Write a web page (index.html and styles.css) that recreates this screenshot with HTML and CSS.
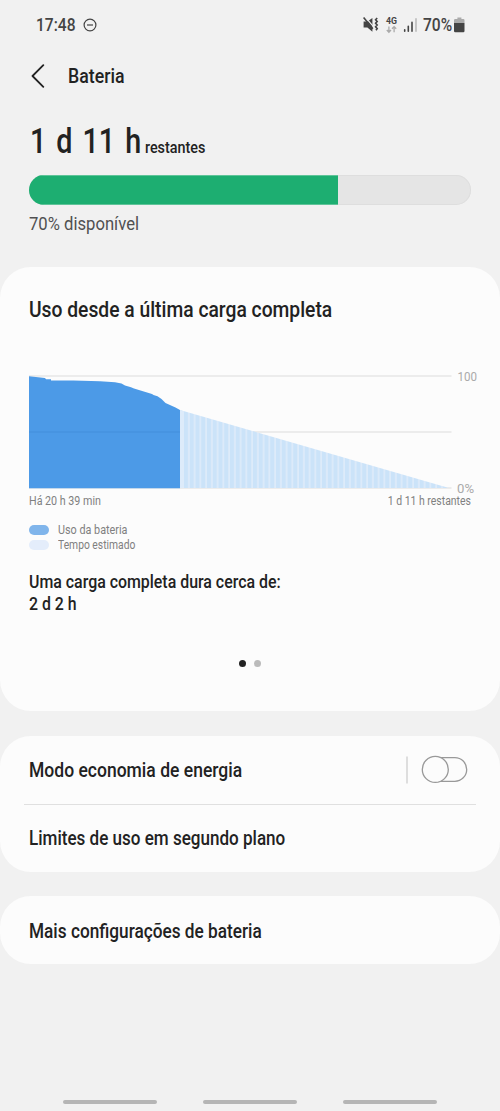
FILE: index.html
```html
<!DOCTYPE html>
<html lang="pt-BR">
<head>
<meta charset="utf-8">
<title>Bateria</title>
<link rel="stylesheet" href="styles.css">
</head>
<body>
<header class="status">
  <span class="clock"><span class="label clock-text">17:48</span></span>
  <svg class="dnd" width="14" height="14" viewBox="0 0 14 14"><circle cx="7" cy="7" r="5.9"/><path d="M4 7h6"/></svg>
  <svg class="signals" width="52" height="20" viewBox="0 0 52 20">
    <path class="solid" d="M0.6 6.5h3.8L9.4 3v13.8l-5-4.2H0.6z"/>
    <path class="gap" d="M2.2 1.8L11 12.4"/>
    <path class="ink" d="M0.6 2.4L9.8 13.8"/>
    <path class="ink" d="M14.2 3l-1.6 1.7 1.6 1.7-1.6 1.8 1.6 1.8-1.6 1.8 1.6 1.8-1.2 1.6"/>
    <text class="net" x="23" y="9.3" textLength="11" lengthAdjust="spacingAndGlyphs">4G</text>
    <path class="faint" d="M25.9 11.5v5.5M23.8 15l2.1 2.2L28 15M31.1 17.2v-5.5M29 13.8l2.1-2.2 2.1 2.2"/>
    <path class="bars" d="M41.7 16.2v-1.4M45.3 16.2v-5M49 16.2v-8.8"/>
  </svg>
  <svg class="bar-off" width="3" height="20" viewBox="0 0 3 20"><path d="M1 16.7v-13.5"/></svg>
  <span class="percent"><span class="label percent-text">70%</span></span>
  <svg class="cell" width="11" height="16" viewBox="0 0 11 16"><path class="cell-top" d="M3.4 0.5h4v1.5H9.3q1.2 0 1.2 1.2V6H0V3.2q0-1.2 1.2-1.2H3.4z"/><path class="cell-fill" d="M0 6h10.5v8q0 1.2-1.2 1.2H1.2Q0 15.2 0 14z"/></svg>
</header>
<div class="appbar">
  <svg class="back" width="14" height="24" viewBox="0 0 14 24"><path d="M12.3 1.2L1.5 12l10.8 10.8"/></svg>
  <h1 class="label">Bateria</h1>
</div>
<section class="summary">
  <div class="remaining"><span class="time"><span class="label time-text">1 d 11 h</span></span><span class="label unit">restantes</span></div>
  <div class="meter"><div class="meter-fill" style="width:70%"></div></div>
  <span class="label available">70% disponível</span>
</section>
<main>
  <section class="card usage">
    <h2 class="label">Uso desde a última carga completa</h2>
    <svg class="chart" width="451" height="130" viewBox="29 364 451 130">
      <defs>
        <pattern id="stripes" x="184" y="0" width="5.75" height="10" patternUnits="userSpaceOnUse"><rect class="stripe-a" width="6" height="10"/><rect class="stripe-b" x="4" width="1.75" height="10"/></pattern>
      </defs>
      <path class="grid" d="M29 376h422.5M29 432h422.5M29 488h422.5"/>
      <path fill="url(#stripes)" d="M180 410L449 488H180z"/>
      <path class="stripe-b" d="M180 410l4 1.2V488h-4z"/>
      <path class="used" d="M29 376.3L45 378l1 1.3h5v1.2l22 .1 27 .6 15 1 6.5 1.3 3.5 2 6 1.7 3 1.3L152 394l1.5 1 4 1.3 4 2.7 4 4 10 4.5 4.500 2.600v78.200H29z"/>
      <path class="used-line" d="M29 432h151"/>
      <text class="axis" x="457.5" y="380.5" textLength="19.5" lengthAdjust="spacingAndGlyphs">100</text>
      <text class="axis" x="457" y="492.5" textLength="17" lengthAdjust="spacingAndGlyphs">0%</text>
    </svg>
    <div class="range"><span class="label since">Há 20 h 39 min</span><span class="label until">1 d 11 h restantes</span></div>
    <ul class="legend">
      <li><i class="swatch"></i><span class="label used-key">Uso da bateria</span></li>
      <li><i class="swatch pale"></i><span class="label estimate-key">Tempo estimado</span></li>
    </ul>
    <p class="full"><span class="label full-title">Uma carga completa dura cerca de:</span><span class="label full-value">2 d 2 h</span></p>
    <div class="dots"><i class="dot on"></i><i class="dot"></i></div>
  </section>
  <section class="card">
    <div class="row"><span class="label saver">Modo economia de energia</span>
      <svg class="switch" width="66" height="32" viewBox="405 754 66 32"><path class="sep" d="M407 756.5v27"/><rect x="423" y="757.6" width="43.7" height="23.7" rx="11.85"/><circle cx="435.3" cy="769.4" r="13"/></svg>
    </div>
    <div class="row second"><span class="label limits">Limites de uso em segundo plano</span></div>
  </section>
  <section class="card"><div class="row"><span class="label more">Mais configurações de bateria</span></div></section>
</main>
<nav class="nav"><i></i><i></i><i></i></nav>
</body>
</html>
```

FILE: styles.css
```css
* { box-sizing: border-box; }
body { margin: 0; width: 500px; height: 1111px; background: #f1f1f1; color: #222; font-family: Roboto, "Liberation Sans", sans-serif; display: flex; flex-direction: column; overflow: hidden; }
h1, h2, p, ul { margin: 0; padding: 0; font-weight: 500; }
svg { display: block; flex: none; }

/* Labels are condensed horizontally; each one sets its own ratio. */
.label { display: inline-block; white-space: nowrap; transform-origin: 0 50%; transform: scaleX(0.9); }

.status { height: 50px; flex: none; padding-left: 36px; display: flex; align-items: center; color: #444; font-size: 17.5px; }
.clock { width: 47px; }
.clock-text { font-weight: 500; transform: scaleX(0.89); }
.dnd { fill: none; stroke: #444; stroke-width: 1.2; }
.signals { margin-left: 266px; }
.signals path { fill: none; }
.signals .solid { fill: #444; }
.signals .gap { stroke: #f1f1f1; stroke-width: 1.2; }
.signals .ink { stroke: #444; stroke-width: 1.6; }
.signals .faint { stroke: #aaa; stroke-width: 1.3; }
.signals .bars { stroke: #444; stroke-width: 1.6; stroke-linecap: round; }
.bar-off { stroke: #bbb; stroke-width: 1.6; }
.net { font-size: 9px; font-weight: 700; fill: #444; }
.percent { margin-left: 5px; width: 31px; }
.percent-text { transform: scaleX(0.89); font-weight: 500; }
.cell-top { fill: #aaa; }
.cell-fill { fill: #444; }

.appbar { height: 52px; flex: none; display: flex; align-items: center; padding-left: 31px; }
.back { fill: none; stroke: #222; stroke-width: 1.8; stroke-linecap: round; stroke-linejoin: round; }
.appbar h1 { margin-left: 23px; font-size: 19.7px; }

.summary { height: 165px; flex: none; padding: 18px 29px 0; }
.remaining { height: 42px; display: flex; align-items: baseline; line-height: 42px; }
.time { font-size: 35.5px; width: 116px; padding-left: 1px; font-weight: 500; }
.time-text { transform: scaleX(0.81); word-spacing: 3.5px; }
.unit { font-size: 16.8px; font-weight: 500; transform: scaleX(0.855); }
.meter { height: 30px; margin: 13px 0 7px; border-radius: 15px; background: #e5e5e5; box-shadow: inset 0 0 0 1px #dedede; overflow: hidden; }
.meter-fill { height: 100%; background: #1dae71; border: solid #5fc499; border-width: 1px 0; }
.available { font-size: 18.6px; line-height: 24px; color: #505050; transform: scaleX(0.895); }

main { display: flex; flex-direction: column; gap: 24.5px; }
.card { background: #fcfcfc; border-radius: 31px; }
.usage { height: 444px; padding: 29px 29px 0; }
.usage h2 { font-size: 21.8px; line-height: 28px; display: block; width: max-content; transform: scaleX(0.884); }
.chart { margin-top: 40px; }
.grid { stroke: #e6e6e6; stroke-width: 1.5; }
.stripe-a { fill: #cbe3f9; }
.stripe-b { fill: #ddebfa; }
.used { fill: #4c9ae7; }
.used-line { stroke: #4692df; stroke-width: 1.3; }
.axis { font-size: 13px; fill: #aaa; }
.range { display: flex; justify-content: space-between; font-size: 12.3px; line-height: 14px; color: #808080; }
.since { transform: scaleX(0.87); }
.until { transform-origin: 100% 50%; transform: scaleX(0.85); }
.legend { list-style: none; margin-top: 14px; font-size: 12.8px; color: #808080; }
.legend li { display: flex; align-items: center; gap: 9px; height: 15px; font-weight: 400; line-height: 15px; }
.used-key { transform: scaleX(0.845); }
.estimate-key { transform: scaleX(0.805); }
.swatch { width: 20px; height: 10px; border-radius: 5px; background: #80b5eb; }
.swatch.pale { background: #e4edfb; }
.full { margin-top: 20px; font-size: 17.6px; line-height: 21.5px; display: flex; flex-direction: column; align-items: flex-start; }
.full-title { transform: scaleX(0.904); }
.full-value { transform: scaleX(0.9); }
.dots { margin-top: 44.5px; display: flex; justify-content: center; gap: 7.5px; }
.dot { width: 7.5px; height: 7.5px; border-radius: 50%; background: #bbb; }
.dot.on { background: #222; }
.row { height: 68px; padding: 0 29px; display: flex; align-items: center; justify-content: space-between; font-size: 19.7px; font-weight: 500; }
.row .label { padding-top: 2px; }
.saver { transform: scaleX(0.89); }
.limits { transform: scaleX(0.866); }
.more { transform: scaleX(0.875); }
.second { margin: 0 24px; padding: 0 5px 2px; border-top: 1.5px solid #e0e0e0; }
.switch { fill: #fcfcfc; stroke: #999; stroke-width: 1.3; }
.sep { stroke: #d5d5d5; stroke-width: 1.5; }

.nav { margin-top: auto; padding-bottom: 7px; display: flex; justify-content: center; gap: 46px; }
.nav i { width: 94px; height: 4.5px; border-radius: 3px; background: #b5b5b5; }
```
